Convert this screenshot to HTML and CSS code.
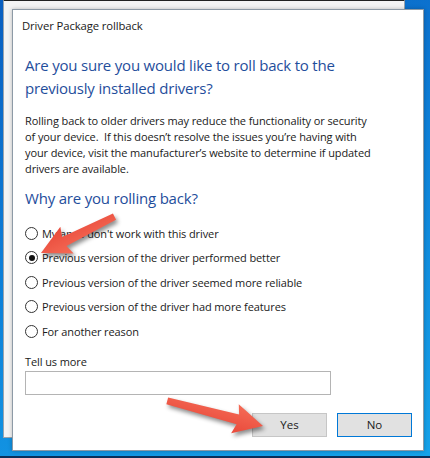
FILE: index.html
```html
<!DOCTYPE html>
<html lang="en">
<head>
    <meta charset="UTF-8">
    <title>Driver Package rollback</title>
    <link rel="stylesheet" href="styles.css">
</head>
<body>
    <div class="desktop">
        <div class="back-window"></div>

        <div class="dialog">
            <div class="dialog-title">Driver Package rollback</div>

            <div class="dialog-body">
                <h1 class="instruction">Are you sure you would like to roll back to the<br>previously installed drivers?</h1>
                <p class="info">Rolling back to older drivers may reduce the functionality or security<br>of your device.&nbsp; If this doesn’t resolve the issues you’re having with<br>your device, visit the manufacturer’s website to determine if updated<br>drivers are available.</p>

                <h2 class="instruction sub">Why are you rolling back?</h2>

                <ul class="reasons">
                    <li><span class="radio"></span>My apps don't work with this driver</li>
                    <li><span class="radio checked"></span>Previous version of the driver performed better</li>
                    <li><span class="radio"></span>Previous version of the driver seemed more reliable</li>
                    <li><span class="radio"></span>Previous version of the driver had more features</li>
                    <li><span class="radio"></span>For another reason</li>
                </ul>

                <div class="more">
                    <label for="more">Tell us more</label>
                    <input type="text" id="more">
                </div>

                <div class="buttons">
                    <button class="btn">Yes</button>
                    <button class="btn default">No</button>
                </div>
            </div>
        </div>

        <!-- annotation arrows drawn over the screenshot -->
        <svg class="arrows" width="430" height="458" viewBox="0 0 430 458">
            <defs>
                <linearGradient id="arrowFill" x1="0" y1="0" x2="0" y2="1">
                    <stop offset="0" stop-color="#f56b56"/>
                    <stop offset="1" stop-color="#e94a3b"/>
                </linearGradient>
            </defs>
            <g transform="translate(41 253) rotate(153.7)">
                <polygon points="-82,-3.5 -26,-5 -29,-15 0,0 -29,15 -26,5 -82,3.5" fill="url(#arrowFill)"/>
            </g>
            <g transform="translate(263 426) rotate(14.7)">
                <polygon points="-99,-3.5 -26,-5 -29,-15 0,0 -29,15 -26,5 -99,3.5" fill="url(#arrowFill)"/>
            </g>
        </svg>
    </div>
</body>
</html>
```

FILE: styles.css
```css
body {
    margin: 0;
    font-family: 'Open Sans', 'Noto Sans', sans-serif;
    font-size: 11px;
    letter-spacing: -0.1px;
    color: #1a1a1a;
}
.desktop {
    position: relative;
    width: 430px;
    height: 458px;
    overflow: hidden;
    background: linear-gradient(160deg, #0a5fc0 0%, #0d7fd8 45%, #16a3ea 100%);
    border-bottom: 2px solid #0a2f5a;
    box-sizing: border-box;
}
.back-window {
    position: absolute;
    left: 3px;
    top: -1px;
    width: 400px;
    height: 436px;
    background: #f4f4f4;
    border: 1px solid #9aa4ad;
    border-top: 2px solid #222;
}
.dialog {
    position: absolute;
    left: 12px;
    top: 9px;
    width: 410px;
    height: 440px;
    background: #fff;
    border: 1px solid #8d9aa6;
    box-shadow: 0 0 4px rgba(0,0,0,0.25);
}
.dialog-title {
    padding: 8px 0 0 9px;
    height: 22px;
    line-height: 16px;
    font-size: 11.3px;
}
.dialog-body {
    padding: 14px 11px 0 12px;
}
.instruction {
    margin: 0;
    font-size: 15px;
    letter-spacing: -0.2px;
    font-weight: normal;
    line-height: 23px;
    color: #1f4e9c;
}
.info {
    margin: 13px 0 0 0;
    line-height: 16px;
}
.sub {
    margin-top: 10px;
}
.reasons {
    list-style: none;
    margin: 11px 0 0 0;
    padding: 0;
}
.reasons li {
    display: flex;
    align-items: center;
    height: 24.5px;
}
.radio {
    width: 11px;
    height: 11px;
    border: 1px solid #333;
    border-radius: 50%;
    margin-right: 4px;
    display: flex;
    align-items: center;
    justify-content: center;
    flex-shrink: 0;
}
.radio.checked::after {
    content: '';
    width: 6px;
    height: 6px;
    border-radius: 50%;
    background: #111;
}
.more {
    margin-top: 10px;
}
.more label {
    display: block;
    line-height: 16px;
}
.more input {
    display: block;
    width: 306px;
    height: 24px;
    margin-top: 1px;
    padding: 0;
    box-sizing: border-box;
    border: 1px solid #b4b4b4;
}
.buttons {
    display: flex;
    justify-content: flex-end;
    gap: 10px;
    margin-top: 18px;
}
.btn {
    width: 75px;
    height: 24px;
    font-family: inherit;
    font-size: 11.5px;
    color: #1a1a1a;
    background: #e1e1e1;
    border: 1px solid #c6c6c6;
}
.btn.default {
    border: 1px solid #0078d7;
}
.arrows {
    position: absolute;
    left: 0;
    top: 0;
    pointer-events: none;
    filter: drop-shadow(2px 3px 2px rgba(0,0,0,0.45));
}
```
